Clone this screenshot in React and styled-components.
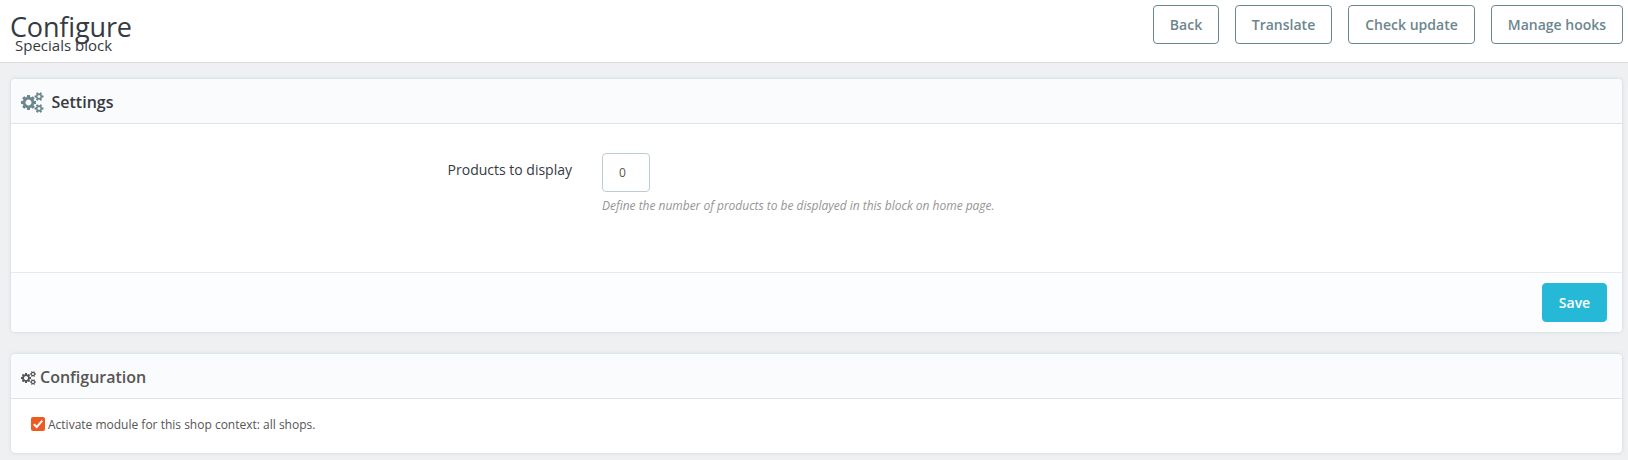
import React from "react";
import styled, { createGlobalStyle } from "styled-components";

const GlobalStyle = createGlobalStyle`
  *, *::before, *::after { box-sizing: border-box; }
  body {
    margin: 0;
    min-height: 460px;
    background: #eff0f2;
    color: #363a41;
    font-family: "Open Sans", "Liberation Sans", sans-serif;
    font-size: 14px;
    overflow: hidden;
  }
`;

const PageHead = styled.header`
  display: flex;
  justify-content: space-between;
  align-items: flex-start;
  height: 63px;
  padding: 5px 5px 0 10px;
  background: #fff;
  border-bottom: 1px solid #d9dbdb;
`;

const Titles = styled.div`
  display: flex;
  flex-direction: column;
`;

const Title = styled.h1`
  margin: 4px 0 0;
  font-size: 27px;
  font-weight: 400;
  line-height: 36px;
  letter-spacing: -0.15px;
`;

const Subtitle = styled.h4`
  margin: -10px 0 0 5px;
  font-size: 15px;
  font-weight: 400;
  line-height: 20px;
`;

const Toolbar = styled.div`
  display: flex;
  gap: 16px;
`;

const Button = styled.button`
  height: 39px;
  width: ${(p) => p.$width}px;
  padding: 0;
  border: 1px solid ${(p) => (p.$primary ? "#25b9d7" : "#6c868e")};
  border-radius: 4px;
  background: ${(p) => (p.$primary ? "#25b9d7" : "#fff")};
  color: ${(p) => (p.$primary ? "#fff" : "#6c868e")};
  font: 600 14px/21px "Open Sans", "Liberation Sans", sans-serif;
  white-space: nowrap;
`;

const Content = styled.main`
  display: flex;
  flex-direction: column;
  gap: 20px;
  padding: 15px 5px 0 10px;
`;

const Panel = styled.section`
  overflow: hidden;
  border: 1px solid #dbe6e9;
  border-radius: 5px;
  background: #fff;
  box-shadow: 0 0 4px rgba(0, 0, 0, 0.06);
`;

const PanelHeading = styled.h3`
  display: flex;
  align-items: center;
  gap: ${(p) => p.$gap}px;
  height: 45px;
  margin: 0;
  padding: 2px 0 0 10px;
  border-bottom: 1px solid #dbe6e9;
  background: #fafbfc;
  color: ${(p) => p.$color};
  font-size: 16px;
  font-weight: 600;
  line-height: 24px;
`;

const Gears = styled.svg`
  width: ${(p) => (p.$size * 15) / 14}px;
  height: ${(p) => p.$size}px;
  margin-top: ${(p) => p.$drop}px;
  flex: none;
  fill: ${(p) => p.$color};
`;

const FormRow = styled.div`
  display: grid;
  grid-template-columns: 561px 1fr;
  column-gap: 30px;
  height: 148px;
  padding-top: 29px;
`;

const Label = styled.label`
  padding-top: 6px;
  text-align: right;
  line-height: 21px;
`;

const NumberInput = styled.input`
  display: block;
  width: 48px;
  height: 39px;
  padding: 0 16px;
  border: 1px solid #bbcdd2;
  border-radius: 4px;
  background: #fff;
  color: #555;
  font: 400 12px/17px "Open Sans", "Liberation Sans", sans-serif;
`;

const Help = styled.p`
  margin: 5px 0 0;
  color: #959595;
  font-size: 12px;
  font-style: italic;
  line-height: 17px;
  letter-spacing: -0.02px;
`;

const PanelFooter = styled.footer`
  display: flex;
  justify-content: flex-end;
  height: 60px;
  padding: 10px 15px 0 0;
  border-top: 1px solid #e7eaec;
  background: #fcfdfe;
`;

const CheckRow = styled.label`
  display: flex;
  align-items: flex-start;
  gap: 3px;
  height: 54px;
  padding: 17px 0 0 20px;
  color: #555;
  font-size: 12px;
  line-height: 17px;
`;

const CheckMark = styled.span`
  display: flex;
  width: 14px;
  height: 14px;
  margin-top: 1px;
  border-radius: 2px;
  background: #ee5a22;
`;

const GEARS_PATH =
  "M896 896q0-106-75-181t-181-75-181 75-75 181 75 181 181 75 181-75 75-181zm768 512q0-52-38-90t-90-38-90 38-38 90q0 53 37.5 90.5t90.5 37.5 90.5-37.5 37.5-90.5zm0-1024q0-52-38-90t-90-38-90 38-38 90q0 53 37.5 90.5t90.5 37.5 90.5-37.5 37.5-90.5zm-384 421v185q0 10-7 19.5t-16 10.5l-155 24q-11 35-32 76 34 48 90 115 7 11 7 20 0 12-7 19-23 30-82.5 89.5t-78.5 59.5q-11 0-21-7l-115-90q-37 19-77 31-11 108-23 155-7 24-30 24h-186q-11 0-20-7.5t-10-17.5l-23-153q-34-10-75-31l-118 89q-7 7-20 7-11 0-21-8-144-133-144-160 0-9 7-19 10-14 41-53t47-61q-23-44-35-82l-152-24q-10-1-17-9.5t-7-19.5v-185q0-10 7-19.5t16-10.5l155-24q11-35 32-76-34-48-90-115-7-11-7-20 0-12 7-20 22-30 82-89t79-59q11 0 21 7l115 90q34-18 77-32 11-108 23-154 7-24 30-24h186q11 0 20 7.5t10 17.5l23 153q34 10 75 31l118-89q8-7 20-7 11 0 21 8 144 133 144 160 0 8-7 19-12 16-42 54t-45 60q23 48 34 82l152 23q10 2 17 10.5t7 19.5zm640 533v140q0 16-149 31-12 27-30 52 51 113 51 138 0 4-4 7-122 71-124 71-8 0-46-47t-52-68q-20 2-30 2t-30-2q-14 21-52 68t-46 47q-2 0-124-71-4-3-4-7 0-25 51-138-18-25-30-52-149-15-149-31v-140q0-16 149-31 13-29 30-52-51-113-51-138 0-4 4-7 4-2 35-20t59-34 30-16q8 0 46 46.5t52 67.5q20-2 30-2t30 2q51-71 92-112l6-2q4 0 124 70 4 3 4 7 0 25-51 138 17 23 30 52 149 15 149 31zm0-1024v140q0 16-149 31-12 27-30 52 51 113 51 138 0 4-4 7-122 71-124 71-8 0-46-47t-52-68q-20 2-30 2t-30-2q-14 21-52 68t-46 47q-2 0-124-71-4-3-4-7 0-25 51-138-18-25-30-52-149-15-149-31v-140q0-16 149-31 13-29 30-52-51-113-51-138 0-4 4-7 4-2 35-20t59-34 30-16q8 0 46 46.5t52 67.5q20-2 30-2t30 2q51-71 92-112l6-2q4 0 124 70 4 3 4 7 0 25-51 138 17 23 30 52 149 15 149 31z";

function GearsIcon({ size, color, drop }) {
  return (
    <Gears viewBox="0 0 1920 1792" $size={size} $color={color} $drop={drop} aria-hidden="true">
      <path d={GEARS_PATH} />
    </Gears>
  );
}

export default function App() {
  return (
    <>
      <GlobalStyle />
      <PageHead>
        <Titles>
          <Title>Configure</Title>
          <Subtitle>Specials block</Subtitle>
        </Titles>
        <Toolbar>
          <Button $width={66}>Back</Button>
          <Button $width={97}>Translate</Button>
          <Button $width={127}>Check update</Button>
          <Button $width={132}>Manage hooks</Button>
        </Toolbar>
      </PageHead>
      <Content>
        <Panel>
          <PanelHeading $gap={8} $color="#363a41">
            <GearsIcon size={21} color="#6c868e" drop={0} />
            Settings
          </PanelHeading>
          <FormRow>
            <Label htmlFor="count">Products to display</Label>
            <div>
              <NumberInput id="count" type="text" defaultValue="0" />
              <Help>Define the number of products to be displayed in this block on home page.</Help>
            </div>
          </FormRow>
          <PanelFooter>
            <Button $primary $width={65}>Save</Button>
          </PanelFooter>
        </Panel>
        <Panel>
          <PanelHeading $gap={4} $color="#555">
            <GearsIcon size={14} color="#555" drop={2} />
            Configuration
          </PanelHeading>
          <CheckRow>
            <CheckMark>
              <svg width="14" height="14" viewBox="0 0 14 14" fill="none" stroke="#fff" strokeWidth="2">
                <path d="M2.8 7.2 5.7 10 11.3 3.6" />
              </svg>
            </CheckMark>
            Activate module for this shop context: all shops.
          </CheckRow>
        </Panel>
      </Content>
    </>
  );
}
